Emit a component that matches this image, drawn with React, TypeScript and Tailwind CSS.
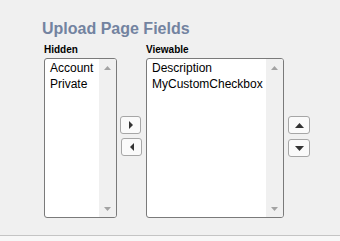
import type { ReactNode } from "react";

const hidden = ["Account", "Private"];
const viewable = ["Description", "MyCustomCheckbox"];

function Arrow({ dir, color, w, h }: { dir: "up" | "down" | "left" | "right"; color: string; w: number; h: number }) {
  const pts = {
    up: `0,${h} ${w / 2},0 ${w},${h}`,
    down: `0,0 ${w},0 ${w / 2},${h}`,
    left: `${w},0 ${w},${h} 0,${h / 2}`,
    right: `0,0 ${w},${h / 2} 0,${h}`,
  }[dir];
  return (
    <svg width={w} height={h} viewBox={`0 0 ${w} ${h}`} className="block">
      <polygon points={pts} fill={color} />
    </svg>
  );
}

function ListBox({ items, width }: { items: string[]; width: string }) {
  return (
    <div className={`${width} h-[160px] flex bg-white border border-[#7a7a7a] rounded-[3px] overflow-hidden`}>
      <div className="flex-1 pl-[5px] pt-[1px] text-[12px] leading-[16px] text-black">
        {items.map((it) => (
          <div key={it} className="whitespace-nowrap">{it}</div>
        ))}
      </div>
      {/* scrollbar */}
      <div className="w-[17px] bg-[#f0f0f0] flex flex-col justify-between">
        <div className="h-[17px] flex items-center justify-center">
          <Arrow dir="up" color="#a3a3a3" w={7} h={4} />
        </div>
        <div className="h-[17px] flex items-center justify-center">
          <Arrow dir="down" color="#a3a3a3" w={7} h={4} />
        </div>
      </div>
    </div>
  );
}

function SmallButton({ children, className = "" }: { children: ReactNode; className?: string }) {
  return (
    <div className={`h-[18px] flex items-center justify-center bg-[#fafafa] border border-[#a6a6a6] rounded-[3px] ${className}`}>
      {children}
    </div>
  );
}

export default function App() {
  return (
    <div className="w-[340px] h-[241px] flex flex-col bg-[#f0f0f0]" style={{ fontFamily: '"Liberation Sans", Arial, sans-serif' }}>
      <div className="flex-1">
        <h1 className="pl-[42px] pt-[20px] text-[16px] leading-[18px] font-bold text-[#7383a0]">Upload Page Fields</h1>
        <div className="flex items-start pl-[44px] mt-[6px]">
          <div className="flex flex-col">
            <div className="text-[10px] leading-[12px] font-bold text-black mb-[2px]">Hidden</div>
            <ListBox items={hidden} width="w-[73px]" />
          </div>
          <div className="flex flex-col gap-[4px] ml-[3px] mt-[72px]">
            <SmallButton className="w-[21px]">
              <Arrow dir="right" color="#333333" w={4} h={8} />
            </SmallButton>
            <SmallButton className="w-[21px] ml-[1px]">
              <Arrow dir="left" color="#333333" w={4} h={8} />
            </SmallButton>
          </div>
          <div className="flex flex-col ml-[4px]">
            <div className="text-[10px] leading-[12px] font-bold text-black mb-[2px]">Viewable</div>
            <ListBox items={viewable} width="w-[138px]" />
          </div>
          <div className="flex flex-col gap-[5px] ml-[4px] mt-[72px]">
            <SmallButton className="w-[22px]">
              <Arrow dir="up" color="#333333" w={9} h={5} />
            </SmallButton>
            <SmallButton className="w-[22px]">
              <Arrow dir="down" color="#333333" w={9} h={5} />
            </SmallButton>
          </div>
        </div>
      </div>
      <div className="h-[6px] border-t border-[#c4c4c4] bg-[#f7f7f7]" />
    </div>
  );
}
